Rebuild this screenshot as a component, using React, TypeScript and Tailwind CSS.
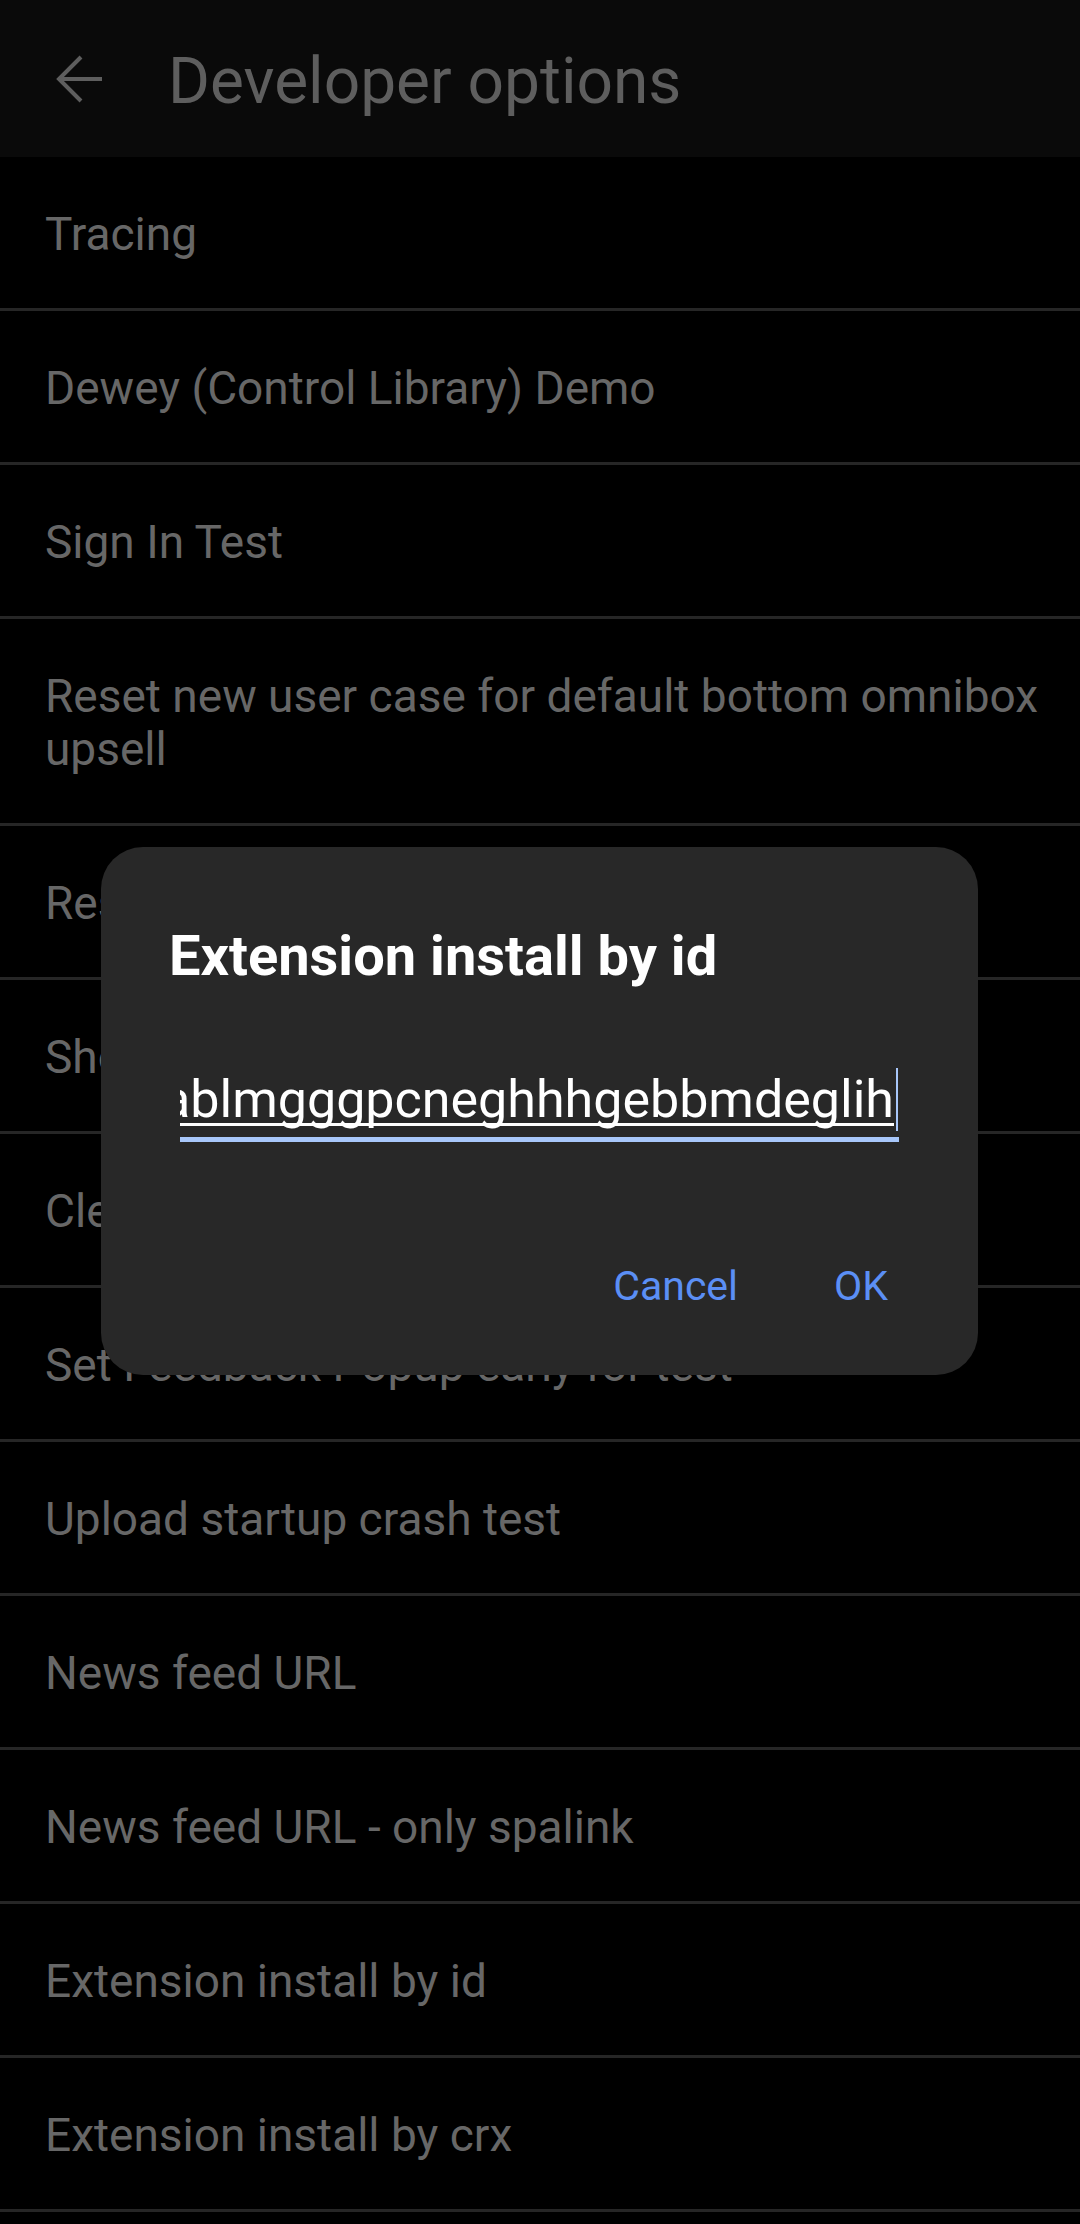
import React from "react";

const rows: string[] = [
  "Tracing",
  "Dewey (Control Library) Demo",
  "Sign In Test",
  "Reset new user case for default bottom omnibox upsell",
  "Reset tab strip",
  "Show tips",
  "Clear data",
  "Set Feedback Popup early for test",
  "Upload startup crash test",
  "News feed URL",
  "News feed URL - only spalink",
  "Extension install by id",
  "Extension install by crx",
  "Extension uninstall",
];

export default function App() {
  return (
    <div className="relative h-[2224px] w-[1080px] overflow-hidden bg-black font-[Roboto,sans-serif]">
      <header className="flex h-[157px] items-center bg-[#0a0a0a] pl-[56px]">
        <svg width="48" height="48" viewBox="0 0 48 48" fill="none" className="shrink-0">
          <path d="M25 2 L3 24 L25 46" stroke="#5e5e5e" strokeWidth="4" strokeLinejoin="miter" />
          <path d="M3 24 H46" stroke="#5e5e5e" strokeWidth="4" />
        </svg>
        <h1 className="ml-[64px] mt-[6px] text-[64px] leading-none text-[#5e5e5e]">Developer options</h1>
      </header>
      <ul>
        {rows.map((r) => (
          <li
            key={r}
            className="border-b-[3px] border-[#262626] pl-[45px] pr-[20px] pt-[51px] pb-[47px] text-[46px] leading-[53px] text-[#676767]"
          >
            {r}
          </li>
        ))}
      </ul>

      <div className="absolute left-[101px] top-[847px] flex h-[528px] w-[877px] flex-col rounded-[42px] bg-[#282828]">
        <h2 className="pl-[68px] pt-[76px] text-[56px] font-bold leading-[67px] text-white">Extension install by id</h2>
        <div className="mx-[79px] mt-[78px] border-b-[5px] border-[#a8c7fa] pb-[6px]">
          <div className="flex h-[63px] items-stretch justify-end overflow-hidden whitespace-nowrap">
            <span className="text-[52px] leading-[63px] text-white underline decoration-[3px] underline-offset-[6px] [text-decoration-skip-ink:none]">
              jdkfhkablmgggpcneghhhgebbmdeglih
            </span>
            <span className="ml-[2px] mr-[1px] mt-[-4px] h-[67px] w-[2px] shrink-0 bg-[#a8c7fa]" />
          </div>
        </div>
        <div className="mt-[120px] flex justify-end gap-[96px] pr-[90px] text-[41px] leading-[48px] text-[#5b8ff5]">
          <span>Cancel</span>
          <span>OK</span>
        </div>
      </div>
    </div>
  );
}
